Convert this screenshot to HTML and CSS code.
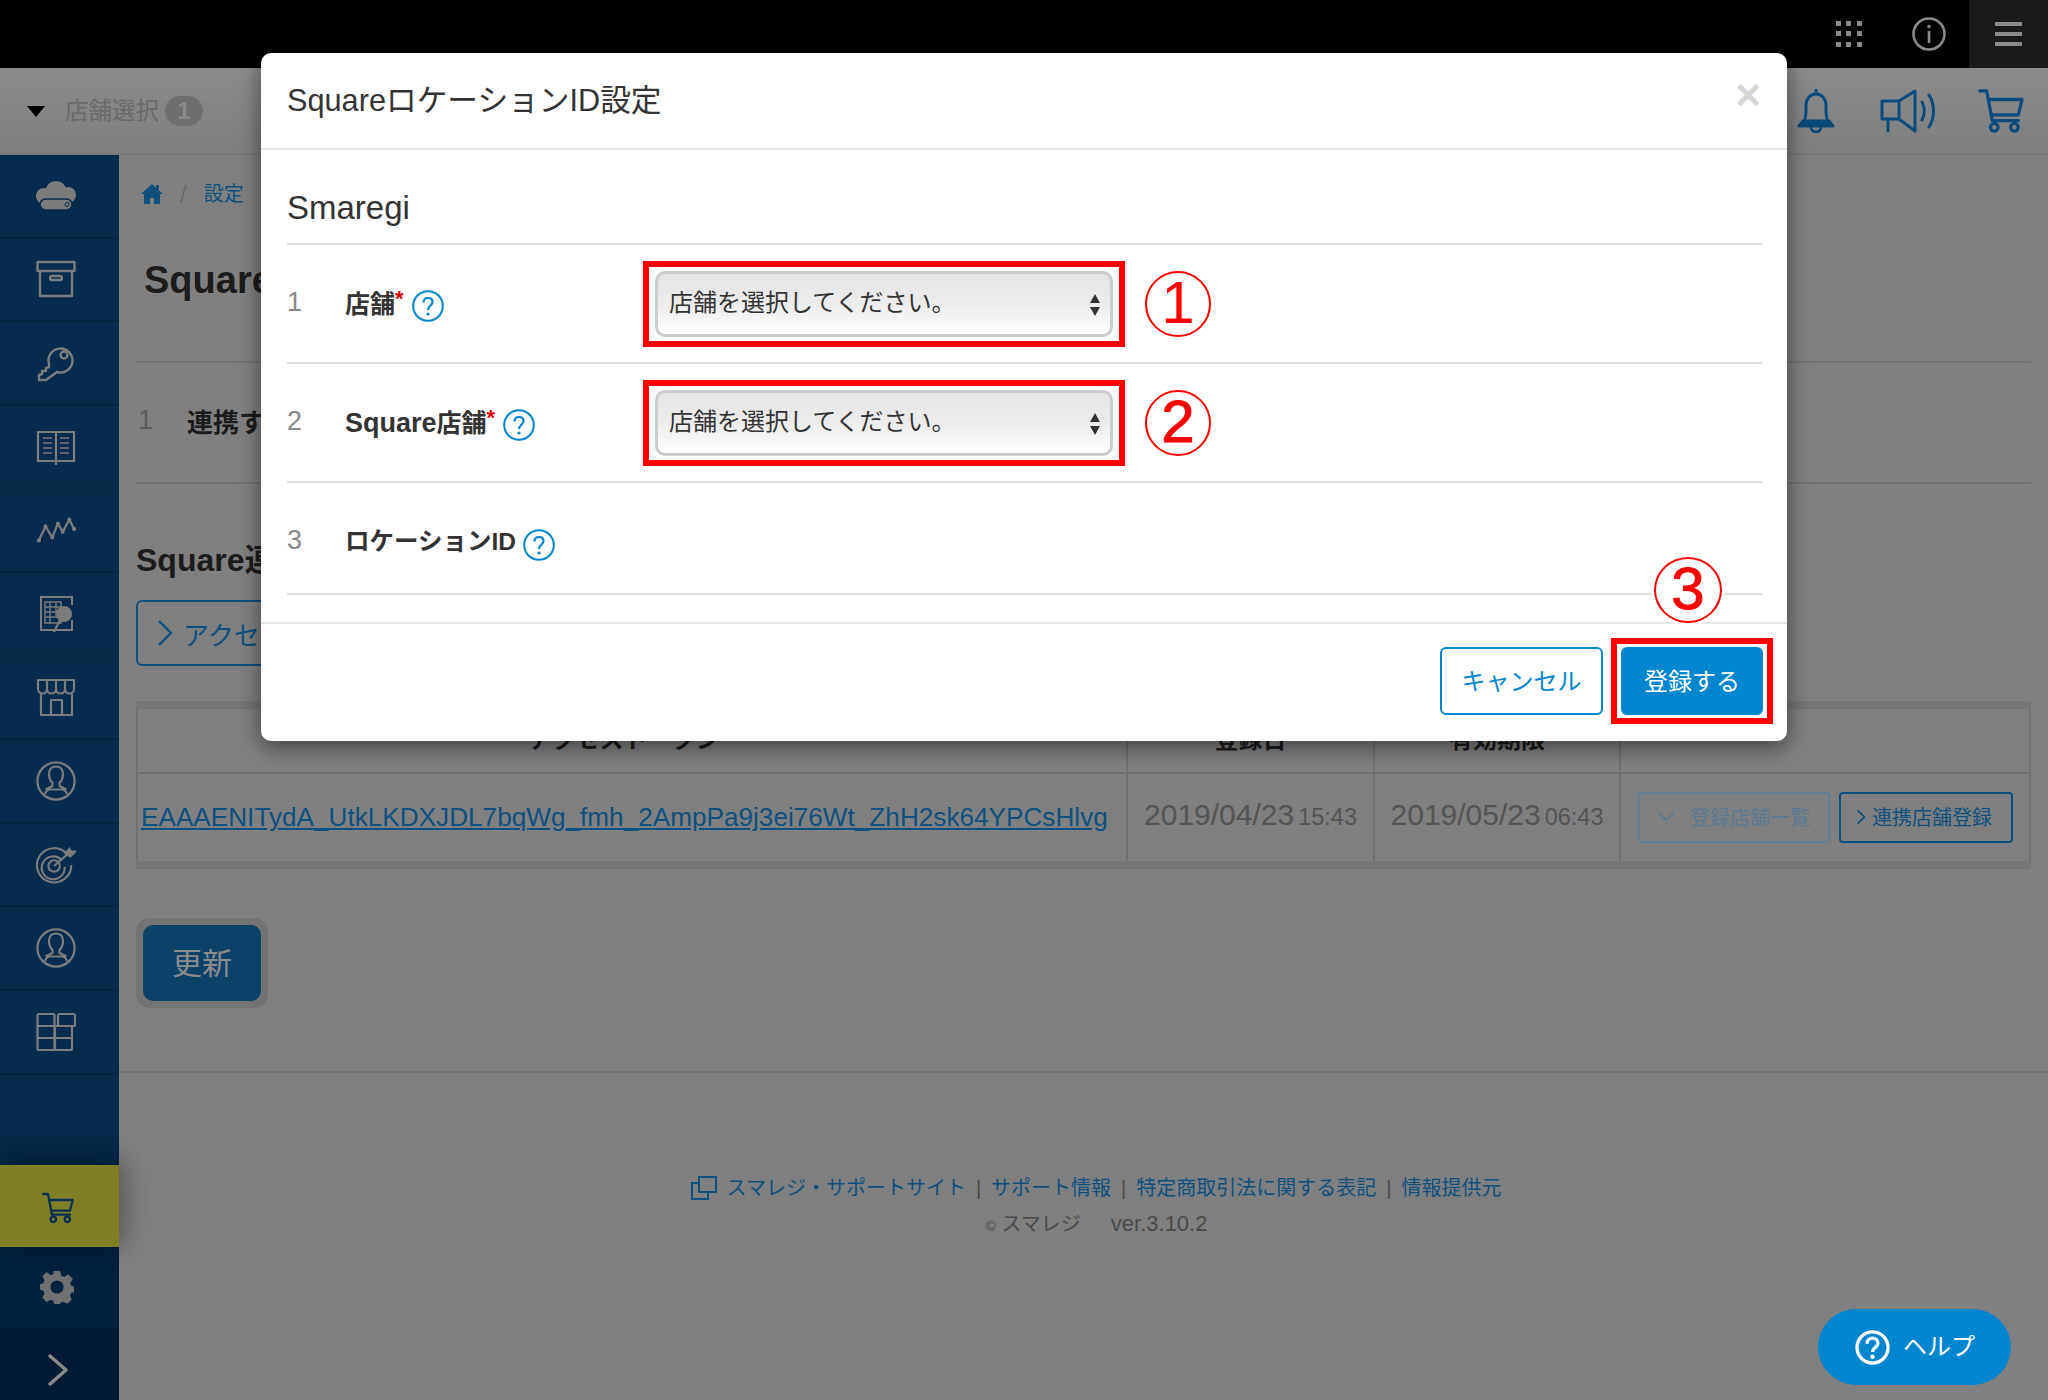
FILE: index.html
```html
<!DOCTYPE html>
<html lang="ja">
<head>
<meta charset="utf-8">
<title>SquareロケーションID設定</title>
<link rel="stylesheet" href="styles.css">
</head>
<body>
<svg class="defs" width="0" height="0">
  <symbol id="cart" viewBox="0 0 48 48">
    <path d="M2 3h7l6 31h27M11 12h35l-4 16H14" fill="none" stroke="currentColor" stroke-width="3.4" stroke-linecap="round" stroke-linejoin="round"/>
    <circle cx="17" cy="41" r="4" fill="none" stroke="currentColor" stroke-width="3.4"/>
    <circle cx="38" cy="41" r="4" fill="none" stroke="currentColor" stroke-width="3.4"/>
  </symbol>
  <symbol id="person" viewBox="0 0 40 40">
    <circle cx="20" cy="20" r="18.6" fill="none" stroke="currentColor" stroke-width="2.2"/>
    <path d="M13 13c0-5 3-7.500 7-7.500s7 2.500 7 7.500c0 4-1.500 7-3.500 9v3l7 3.500M13 13c0 4 1.500 7 3.500 9v3l-7 3.500M9 33c1-3 3-4.500 5-4.500h12c2 0 4 1.500 5 4.500" fill="none" stroke="currentColor" stroke-width="2.200" stroke-linejoin="round"/>
  </symbol>
  <symbol id="help" viewBox="0 0 32 32">
    <circle cx="16" cy="16" r="14.800" fill="none" stroke="currentColor" stroke-width="2"/>
    <path d="M11.500 12.500c0-3 2-4.500 4.500-4.500s4.500 1.500 4.500 4c0 3.500-4.500 4-4.500 8" fill="none" stroke="currentColor" stroke-width="2.200"/>
    <circle cx="16" cy="24" r="1.600" fill="currentColor"/>
  </symbol>
  <symbol id="help-bold" viewBox="0 0 32 32">
    <circle cx="16" cy="16" r="14.200" fill="none" stroke="currentColor" stroke-width="3"/>
    <path d="M11 12.500c0-3 2.200-5 5-5s5 1.800 5 4.500c0 3.800-5 4-5 8" fill="none" stroke="currentColor" stroke-width="3"/>
    <circle cx="16" cy="24.500" r="2" fill="currentColor"/>
  </symbol>
</svg>

<header class="topbar">
  <svg class="top-icon grid-icon" viewBox="0 0 26 26"><g fill="currentColor"><rect width="5" height="5"/><rect x="10" width="5" height="5"/><rect x="21" width="5" height="5"/><rect y="10" width="5" height="5"/><rect x="10" y="10" width="5" height="5"/><rect x="21" y="10" width="5" height="5"/><rect y="21" width="5" height="5"/><rect x="10" y="21" width="5" height="5"/><rect x="21" y="21" width="5" height="5"/></g></svg>
  <svg class="top-icon info-icon" viewBox="0 0 34 34"><circle cx="17" cy="17" r="15.500" fill="none" stroke="currentColor" stroke-width="2.600"/><rect x="15.700" y="14" width="2.600" height="12" fill="currentColor"/><circle cx="17" cy="9.500" r="1.800" fill="currentColor"/></svg>
  <div class="burger"><span></span><span></span><span></span></div>
</header>

<nav class="navbar">
  <div class="store-select">
    <span class="caret"></span>
    <span class="store-label">店舗選択</span>
    <span class="badge">1</span>
  </div>
  <div class="nav-icons">
    <svg class="bell" viewBox="0 0 38 44"><path d="M19 1v4M6 35c2-4 3-6 3-12v-6c0-7 4-12 10-12s10 5 10 12v6c0 6 1 8 3 12zM2 37h34l-4-5H6zM14 38a5 5 0 0 0 10 0" fill="none" stroke="currentColor" stroke-width="3" stroke-linejoin="round" stroke-linecap="round"/></svg>
    <svg class="horn" viewBox="0 0 56 44"><path d="M2 12h17L35 2v40L19 30H2zM19 12v18M8 30v12M42 13c3 5 3 13 0 18M49 6c6 9 6 23 0 32" fill="none" stroke="currentColor" stroke-width="3" stroke-linejoin="round" stroke-linecap="round"/></svg>
    <svg class="nav-cart"><use href="#cart"/></svg>
  </div>
</nav>

<div class="layout">
  <aside class="sidebar">
    <div class="side-item"><svg class="side-icon" viewBox="0 0 40 30"><g fill="currentColor"><circle cx="20" cy="10.500" r="10.500"/><circle cx="8" cy="15" r="8"/><circle cx="32" cy="14" r="8"/></g><rect x="4" y="18" width="32" height="11" rx="5.500" fill="currentColor" stroke="#062b4c" stroke-width="1.600"/><circle cx="31" cy="23.500" r="2" fill="none" stroke="#062b4c" stroke-width="1"/></svg></div>
    <div class="side-item"><svg class="side-icon" viewBox="0 0 40 40"><g fill="none" stroke="currentColor" stroke-width="2.400" stroke-linejoin="round"><rect x="1.500" y="3" width="37" height="9"/><path d="M4 12v25h32V12"/><rect x="14" y="17" width="12" height="4" rx="2"/></g></svg></div>
    <div class="side-item"><svg class="side-icon" viewBox="0 0 40 40"><g fill="none" stroke="currentColor" stroke-width="2.400" stroke-linejoin="round"><path d="M13 21a12 12 0 1 1 8 8l-11 8H3v-5l3-1v-3h4v-3l3-1z"/><circle cx="28" cy="12" r="3.500"/></g></svg></div>
    <div class="side-item"><svg class="side-icon" viewBox="0 0 40 40"><g fill="none" stroke="currentColor" stroke-width="2.200"><path d="M2 5h36v29H2zM20 5v33"/><path d="M7 11h9M7 16h9M7 21h9M7 26h9M24 11h9M24 16h9M24 21h9M24 26h9" stroke-width="1.600"/></g></svg></div>
    <div class="side-item"><svg class="side-icon" viewBox="0 0 42 30"><path d="M3 26 10 11l7 12 6-15 5 9 7-13 5 10" fill="none" stroke="currentColor" stroke-width="2.400" stroke-linejoin="round"/><g fill="currentColor"><circle cx="3" cy="26" r="2.200"/><circle cx="10" cy="11" r="2"/><circle cx="17" cy="23" r="2"/><circle cx="23" cy="8" r="2"/><circle cx="28" cy="17" r="2"/><circle cx="35" cy="4" r="2"/><circle cx="40" cy="14" r="2.200"/></g></svg></div>
    <div class="side-item"><svg class="side-icon" viewBox="0 0 40 40"><g fill="none" stroke="currentColor" stroke-width="2"><path d="M28 3H5v33h31V26M5 3h31v8"/><path d="M9 8h16v21H9zM9 13h16M9 18h14M9 23h12M14 8v21M20 8v14" stroke-width="1.400"/><circle cx="28" cy="20" r="7" fill="currentColor"/><path d="M24 26 18 38" stroke-width="2.200"/></g></svg></div>
    <div class="side-item"><svg class="side-icon" viewBox="0 0 40 40"><g fill="none" stroke="currentColor" stroke-width="2.200" stroke-linejoin="round"><path d="M2 3h36v9c0 6-9 6-9 0 0 6-9 6-9 0 0 6-9 6-9 0 0 6-9 6-9 0zM11 3v9M20 3v9M29 3v9M5 17v21h31V17M15 38V23h11v15"/></g></svg></div>
    <div class="side-item"><svg class="side-icon"><use href="#person"/></svg></div>
    <div class="side-item"><svg class="side-icon" viewBox="0 0 42 40"><g fill="none" stroke="currentColor" stroke-width="2.200"><path d="M33 9a18 18 0 1 0 4 11"/><path d="M27 15a12 12 0 1 0 3 7"/><circle cx="19" cy="21" r="6"/><path d="M19 21 35 7"/><path d="M31 8l4-5 2 3 4 0-5 5z" fill="currentColor"/></g></svg></div>
    <div class="side-item"><svg class="side-icon"><use href="#person"/></svg></div>
    <div class="side-item"><svg class="side-icon" viewBox="0 0 40 40"><g fill="none" stroke="currentColor" stroke-width="2.200" stroke-linejoin="round"><rect x="1.500" y="2" width="17" height="12" rx="1.500"/><rect x="22" y="2" width="17" height="12" rx="1.500"/><rect x="1.500" y="14" width="17" height="12"/><rect x="19" y="14" width="17" height="12"/><rect x="1.500" y="26" width="17" height="12" rx="1.500"/><rect x="19" y="26" width="17" height="12" rx="1.500"/></g></svg></div>
    <div class="side-spacer"></div>
    <div class="side-cart"><svg class="side-cart-icon"><use href="#cart"/></svg></div>
    <div class="side-gear"><svg class="gear-icon" viewBox="0 0 36 36"><path fill="currentColor" fill-rule="evenodd" d="M14.500 1h7l1 5 3 1.300 4.300-2.800 5 5-2.800 4.300L33 17l3 .5v6l-3 .5-1.300 3 1.800 4.300-4.500 4.500-4.300-2.300-2.700 1L21 36h-6l-1-3.500-2.700-1L7 33.800 2.500 29.300 4.800 25 3.500 22 0 21v-6l3.500-1 1.300-3-2.300-4.300 4.500-4.500L11 5.500 14 4.500zM18 11a7 7 0 1 0 0 14 7 7 0 0 0 0-14z"/></svg></div>
    <div class="side-toggle"><svg class="toggle-icon" viewBox="0 0 20 32"><path d="M2 2l16 14L2 30" fill="none" stroke="currentColor" stroke-width="3.400" stroke-linecap="round" stroke-linejoin="round"/></svg></div>
  </aside>

  <main class="main">
    <div class="crumbs">
      <svg class="home-icon" viewBox="0 0 22 20"><path fill="currentColor" d="M11 0 0 10h3v10h6v-6h4v6h6V10h3l-4-3.600V1h-3v2.700z"/></svg>
      <span class="crumb-sep">/</span><a class="crumb-link">設定</a><span class="crumb-sep">/</span><a class="crumb-link">Square連携</a>
    </div>
    <h1 class="page-title">Square連携設定</h1>
    <div class="bg-row"><span class="bg-num">1</span><strong class="bg-label">連携する店舗</strong></div>
    <h2 class="section-title">Square連携</h2>
    <a class="outline-btn"><svg class="chev" viewBox="0 0 16 28"><path d="M2 2l12 12L2 26" fill="none" stroke="currentColor" stroke-width="2.400"/></svg>アクセストークン取得</a>
    <table class="token-table">
      <colgroup><col class="col-token"><col class="col-date"><col class="col-date2"><col></colgroup>
      <thead><tr><th class="th-token">アクセストークン</th><th>登録日</th><th>有効期限</th><th></th></tr></thead>
      <tbody><tr>
        <td class="token-cell"><a class="token-link">EAAAENITydA_UtkLKDXJDL7bqWg_fmh_2AmpPa9j3ei76Wt_ZhH2sk64YPCsHlvg</a></td>
        <td class="date-cell">2019/04/23<small>15:43</small></td>
        <td class="date-cell">2019/05/23<small>06:43</small></td>
        <td class="action-cell">
          <div class="actions">
            <a class="mini-btn mini-muted"><svg class="mini-down" viewBox="0 0 20 12"><path d="M2 2l8 8 8-8" fill="none" stroke="currentColor" stroke-width="2"/></svg>登録店舗一覧</a>
            <a class="mini-btn mini-strong"><svg class="mini-right" viewBox="0 0 12 20"><path d="M2 2l8 8-8 8" fill="none" stroke="currentColor" stroke-width="2"/></svg>連携店舗登録</a>
          </div>
        </td>
      </tr></tbody>
    </table>
    <div class="update-wrap"><button class="update-btn">更新</button></div>
    <footer class="page-footer">
      <p class="foot-links"><svg class="ext-icon" viewBox="0 0 26 24"><g fill="none" stroke="currentColor" stroke-width="2"><rect x="8" y="1" width="17" height="15"/><path d="M8 7H1v16h16v-7"/></g></svg><a>スマレジ・サポートサイト</a><i>|</i><a>サポート情報</a><i>|</i><a>特定商取引法に関する表記</a><i>|</i><a>情報提供元</a></p>
      <p class="foot-copy"><span class="copy-mark">©</span> スマレジ<span class="foot-ver">ver.3.10.2</span></p>
    </footer>
  </main>
</div>

<a class="help-pill"><svg class="help-pill-icon"><use href="#help-bold"/></svg><span class="help-text">ヘルプ</span></a>

<section class="modal">
  <div class="modal-head"><h3 class="modal-title">SquareロケーションID設定</h3><span class="modal-close">×</span></div>
  <div class="modal-body">
    <h4 class="modal-sub">Smaregi</h4>
    <div class="form-row">
      <span class="form-num">1</span>
      <label class="form-label"><span class="label-text">店舗</span><b class="req">*</b><svg class="q-icon"><use href="#help"/></svg></label>
      <div class="marked"><div class="select-box">店舗を選択してください。<svg class="updown" viewBox="0 0 12 24"><path fill="currentColor" d="M6 1l5 9H1zM6 23l-5-9h10z"/></svg></div></div>
      <span class="circled circled-thin">1</span>
    </div>
    <div class="form-row">
      <span class="form-num">2</span>
      <label class="form-label"><span class="label-text"><span class="latin">Square</span>店舗</span><b class="req">*</b><svg class="q-icon"><use href="#help"/></svg></label>
      <div class="marked"><div class="select-box">店舗を選択してください。<svg class="updown" viewBox="0 0 12 24"><path fill="currentColor" d="M6 1l5 9H1zM6 23l-5-9h10z"/></svg></div></div>
      <span class="circled">2</span>
    </div>
    <div class="form-row form-row-last">
      <span class="form-num">3</span>
      <label class="form-label"><span class="label-text label-narrow">ロケーションID</span><svg class="q-icon"><use href="#help"/></svg></label>
    </div>
  </div>
  <div class="modal-foot">
    <button class="btn-cancel">キャンセル</button>
    <div class="marked-btn"><button class="btn-save">登録する</button></div>
  </div>
  <span class="circled circled-three">3</span>
</section>
</body>
</html>
```

FILE: styles.css
```css
* { box-sizing: border-box; }
html, body { margin: 0; height: 1400px; overflow: hidden; }
body {
  position: relative;
  background: #808080;
  color: #222;
  font-family: "Liberation Sans", "Noto Sans CJK JP", sans-serif;
}
.defs { position: absolute; }
p, h1, h2, h3, h4 { margin: 0; font-weight: normal; }

/* top bar */
.topbar { height: 68px; background: #000; display: flex; align-items: center; justify-content: flex-end; color: #8a8a8a; }
.top-icon { display: block; }
.grid-icon { width: 26px; height: 26px; }
.info-icon { width: 34px; height: 34px; margin-left: 50px; margin-right: 23px; }
.burger { width: 79px; height: 68px; background: #1a1a1a; display: flex; flex-direction: column; justify-content: center; align-items: center; gap: 6px; }
.burger span { width: 27px; height: 4px; background: #8a8a8a; }

/* nav */
.navbar { height: 87px; background: linear-gradient(#8b8b8b, #7f7f7f); border-bottom: 2px solid #777; display: flex; align-items: center; justify-content: space-between; padding: 0 22px 0 27px; }
.store-select { display: flex; align-items: center; color: #6a6a6a; }
.caret { width: 0; height: 0; border-left: 9px solid transparent; border-right: 9px solid transparent; border-top: 11px solid #000; margin-right: 20px; margin-top: 2px; }
.store-label { font-size: 23.500px; padding-bottom: 3px; }
.badge { width: 38px; height: 30px; border-radius: 15px; background: #6f6f6f; color: #8a8a8a; font-size: 24px; font-weight: bold; text-align: center; line-height: 30px; margin-left: 6px; }
.nav-icons { display: flex; align-items: center; color: #0a4b7c; padding-top: 1px; }
.bell { width: 38px; height: 44px; margin-right: 1px; }
.horn { width: 56px; height: 44px; margin-left: 44px; }
.nav-cart { width: 50px; height: 46px; margin-left: 40px; }

/* layout */
.layout { display: flex; height: 1245px; }
.sidebar { width: 119px; flex: none; background: #062b4c; display: flex; flex-direction: column; color: #7c7c7c; position: relative; }
.side-item { height: 83.600px; flex: none; border-bottom: 2px solid #05263f; display: flex; align-items: center; justify-content: center; padding-right: 7px; }
.side-icon { width: 40px; height: 40px; }
.side-spacer { flex: 1; }
.side-cart { height: 82px; background: #7f7f25; display: flex; align-items: center; justify-content: center; box-shadow: 0 -6px 30px rgba(0,0,0,.35), 6px 0 24px rgba(0,0,0,.12); position: relative; }
.side-cart-icon { width: 36px; height: 32px; color: #0a2f55; margin-top: 3px; margin-right: 4px; }
.side-gear { height: 81px; background: #03223d; display: flex; align-items: center; justify-content: center; }
.gear-icon { width: 34px; height: 34px; color: #707070; margin-right: 5px; margin-bottom: 2px; }
.side-toggle { height: 72px; background: #021b33; display: flex; align-items: center; justify-content: center; padding-top: 12px; }
.toggle-icon { width: 20px; height: 32px; color: #8a8a8a; margin-left: -3px; }

/* main */
.main { flex: 1; padding: 0 17px; }
.crumbs { height: 78px; display: flex; align-items: center; gap: 17px; padding-left: 5px; font-size: 20px; color: #0e4f7e; }
.crumb-link { padding-bottom: 4px; }
.home-icon { width: 22px; height: 20px; }
.crumb-sep { color: #6c6c6c; font-size: 24px; }
.page-title { height: 130px; padding-top: 25px; line-height: 44px; font-size: 38px; font-weight: bold; color: #1c1c1c; border-bottom: 2px solid #737373; padding-left: 8px; }
.bg-row { height: 121px; display: flex; align-items: center; border-bottom: 2px solid #737373; padding: 0 0 4px 2px; font-size: 26px; }
.bg-num { width: 49px; color: #5a5a5a; font-size: 27px; }
.bg-label { color: #1c1c1c; }
.section-title { margin-top: 54px; height: 44px; line-height: 44px; font-size: 32px; font-weight: bold; color: #1c1c1c; }
.outline-btn { margin-top: 18px; width: 420px; height: 66px; border: 2px solid #0e4f7e; border-radius: 6px; display: flex; align-items: center; padding-left: 19px; gap: 10px; font-size: 26px; color: #0e4f7e; }
.chev { width: 16px; height: 28px; flex: none; }
.token-table { margin-top: 35px; width: 1895px; table-layout: fixed; border-collapse: collapse; border-top: 8px solid #767676; border-bottom: 8px solid #767676; border-left: 2px solid #727272; border-right: 2px solid #727272; }
.col-token { width: 990px; }
.col-date { width: 247px; }
.col-date2 { width: 246px; }
.token-table th { height: 68px; font-size: 24px; font-weight: bold; color: #1c1c1c; border: 2px solid #717171; padding: 0 0 6px; }
.token-table .th-token { padding-right: 16px; }
.token-table td { height: 92px; border: 2px solid #717171; padding: 0; }
.token-table .token-cell { padding-left: 3px; }
.token-link { font-size: 26.170px; color: #0e4f7e; text-decoration: underline; white-space: nowrap; }
.token-table .date-cell { text-align: center; font-size: 30px; color: #545454; white-space: nowrap; padding-bottom: 5px; }
.date-cell small { font-size: 23.500px; margin-left: 4px; }
.actions { display: flex; gap: 9px; padding-left: 17px; }
.mini-btn { height: 51px; border-radius: 4px; display: flex; align-items: center; font-size: 20px; white-space: nowrap; padding-bottom: 2px; }
.mini-muted { width: 192px; border: 2px solid #5f7f98; color: #5a7a94; padding-left: 17px; gap: 14px; }
.mini-strong { width: 174px; border: 2px solid #0e4f7e; color: #0e4f7e; padding-left: 15px; gap: 6px; }
.mini-down { width: 19px; height: 11px; flex: none; }
.mini-right { width: 10px; height: 18px; flex: none; }
.update-wrap { margin-top: 49px; width: 132px; height: 90px; padding: 7px; border-radius: 14px; background: #737373; }
.update-btn { width: 118px; height: 76px; border: 0; border-radius: 10px; background: #0a4268; color: #8c8c8c; font: 30px "Liberation Sans", "Noto Sans CJK JP", sans-serif; padding: 0 0 5px; }
.page-footer { margin: 63px -17px 0; border-top: 2px solid #737373; padding-top: 100px; text-align: center; font-size: 20px; color: #4a4a4a; }
.foot-links { height: 30px; line-height: 30px; color: #0e4f7e; display: flex; justify-content: center; align-items: center; padding-left: 26px; }
.foot-links i { font-style: normal; color: #4a4a4a; margin: 0 10px; }
.ext-icon { width: 26px; height: 24px; margin-right: 9px; }
.foot-copy { margin-top: 6px; height: 30px; line-height: 30px; padding-left: 26px; }
.copy-mark { font-size: 14px; }
.foot-ver { margin-left: 30px; font-size: 22px; }

/* help */
.help-pill { position: absolute; left: 1818px; top: 1309px; width: 193px; height: 76px; border-radius: 38px; background: #0085cf; color: #fff; display: flex; align-items: center; font-size: 24px; padding-left: 37px; gap: 13px; }
.help-pill-icon { width: 35px; height: 35px; }
.help-text { padding-bottom: 5px; }

/* modal */
.modal { position: absolute; left: 261px; top: 53px; width: 1526px; height: 688px; background: #fff; border-radius: 10px; box-shadow: 0 6px 22px rgba(0,0,0,.5); display: flex; flex-direction: column; }
.modal-head { height: 97px; flex: none; border-bottom: 2px solid #e5e5e5; display: flex; align-items: center; justify-content: space-between; padding: 0 26px 0 26px; }
.modal-title { font-size: 30.700px; color: #333; padding-bottom: 6px; }
.modal-close { font-size: 44px; font-weight: bold; line-height: 1; color: #d6d6d6; padding-bottom: 11px; }
.modal-body { flex: 1; padding: 0 25px 0 26px; }
.modal-sub { height: 95px; padding-top: 36px; line-height: 44px; font-size: 33px; color: #333; border-bottom: 2px solid #ddd; }
.form-row { height: 119px; border-bottom: 2px solid #ddd; display: flex; align-items: center; }
.form-row-last { height: 112px; padding-top: 6px; }
.form-num { width: 58px; font-size: 27px; color: #888; padding-bottom: 2px; }
.form-label { width: 298px; font-size: 25px; font-weight: bold; color: #333; display: flex; align-items: center; }
.label-text { padding-bottom: 4px; }
.latin { font-size: 27px; }
.label-narrow { font-size: 24.500px; }
.req { color: #e00000; font-size: 22px; line-height: 1; margin-top: -10px; padding-right: 1px; }
.q-icon { width: 32px; height: 32px; color: #0085cf; margin-left: 7px; margin-top: 4px; }
.form-row-last .q-icon { margin-top: 7px; }
.marked { width: 482px; height: 86px; border: 6px solid #f00; padding: 4px 6px; }
.select-box { position: relative; height: 66px; border: 3px solid #ccc; border-radius: 10px; background: linear-gradient(#e4e4e4, #ececec 50%, #fff); padding-left: 11px; font-size: 24px; line-height: 57px; color: #333; }
.updown { position: absolute; right: 9px; top: 19px; width: 12px; height: 24px; color: #333; }
.circled { width: 66px; height: 66px; margin-left: 20px; border: 2px solid #f00; border-radius: 50%; color: #f00; font-size: 60px; line-height: 60px; text-align: center; background: #fff; -webkit-text-stroke: 1px #f00; }
.circled-thin { -webkit-text-stroke: 0; }
.circled-three { position: absolute; left: 1393px; top: 504px; width: 68px; margin: 0; box-shadow: 0 0 0 3px #fff; }
.modal-foot { height: 119px; flex: none; border-top: 2px solid #e5e5e5; display: flex; justify-content: flex-end; align-items: center; padding: 0 14px 0 0; gap: 8px; }
.btn-cancel { width: 163px; height: 68px; border: 2px solid #0085cf; border-radius: 6px; background: #fff; color: #0085cf; font: 24px "Liberation Sans", "Noto Sans CJK JP", sans-serif; margin-top: -3px; padding: 0 0 4px; }
.marked-btn { width: 162px; height: 86px; border: 6px solid #f00; padding: 3px 4px; margin-top: -3px; }
.btn-save { width: 142px; height: 68px; border: 0; border-radius: 6px; background: #0085cf; color: #fff; font: 24px "Liberation Sans", "Noto Sans CJK JP", sans-serif; padding: 0 0 4px; }
```
